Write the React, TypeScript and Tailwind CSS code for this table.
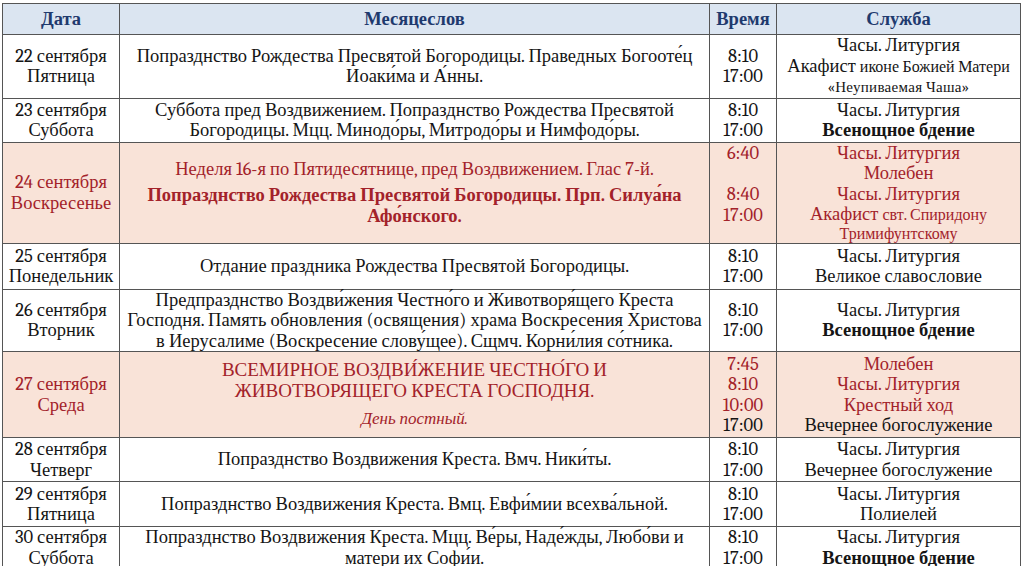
import React from "react";

const A = "\u0301";

type Line = { text: React.ReactNode; cls?: string };

type Row = {
  date: string;
  day: string;
  h: string;
  pink?: boolean;
  cal: React.ReactNode;
  times: Line[];
  service: Line[];
};

const red = "text-[#a3222a]";
const serif = "font-serif text-[18.5px] leading-[20.5px]";

const Akafist = ({ rest }: { rest: string }) => (
  <>
    Акафист <span className="font-serif text-[16px]">{rest}</span>
  </>
);

const rows: Row[] = [
  {
    date: "22 сентября",
    day: "Пятница",
    h: "h-[63px]",
    cal: (
      <>
        Попразднство Рождества Пресвятой Богородицы. Праведных Богооте{A}ц
        <br />
        Иоаки{A}ма и А{A}нны.
      </>
    ),
    times: [{ text: "8:10" }, { text: "17:00" }],
    service: [
      { text: "Часы. Литургия" },
      { text: <Akafist rest="иконе Божией Матери" /> },
      { text: "«Неупиваемая Чаша»", cls: "text-[15px] tracking-[0.3px]" },
    ],
  },
  {
    date: "23 сентября",
    day: "Суббота",
    h: "h-[44px]",
    cal: (
      <>
        Суббота пред Воздвижением. Попразднство Рождества Пресвятой
        <br />
        Богородицы. Мцц. Минодо{A}ры, Митродо{A}ры и Нимфодо{A}ры.
      </>
    ),
    times: [{ text: "8:10" }, { text: "17:00" }],
    service: [
      { text: "Часы. Литургия" },
      { text: "Всенощное бдение", cls: "font-bold" },
    ],
  },
  {
    date: "24 сентября",
    day: "Воскресенье",
    h: "h-[100px]",
    pink: true,
    cal: (
      <div className={red}>
        <p className="mb-[6px]">
          Неделя 16-я по Пятидесятнице, пред Воздвижением. Глас 7-й.
        </p>
        <p className="font-bold">
          Попразднство Рождества Пресвятой Богородицы. Прп. Силуа{A}на
          <br />
          Афо{A}нского.
        </p>
      </div>
    ),
    times: [
      { text: "6:40", cls: red },
      { text: "\u00a0" },
      { text: "8:40", cls: red },
      { text: "17:00", cls: red },
      { text: "\u00a0", cls: "leading-[17px]" },
    ],
    service: [
      { text: "Часы. Литургия", cls: red },
      { text: "Молебен", cls: red },
      { text: "Часы. Литургия", cls: red },
      { text: <Akafist rest="свт. Спиридону" />, cls: red },
      { text: "Тримифунтскому", cls: `${red} text-[16px] leading-[17px]` },
    ],
  },
  {
    date: "25 сентября",
    day: "Понедельник",
    h: "h-[46px]",
    cal: <>Отдание праздника Рождества Пресвятой Богородицы.</>,
    times: [{ text: "8:10" }, { text: "17:00" }],
    service: [{ text: "Часы. Литургия" }, { text: "Великое славословие" }],
  },
  {
    date: "26 сентября",
    day: "Вторник",
    h: "h-[62px]",
    cal: (
      <>
        Предпразднство Воздви{A}жения Честно{A}го и Животворя{A}щего Креста
        <br />
        Господня. Память обновления (освящения) храма Воскресения Христова
        <br />
        в Иерусалиме (Воскресение слову{A}щее). Сщмч. Корни{A}лия со{A}тника.
      </>
    ),
    times: [{ text: "8:10" }, { text: "17:00" }],
    service: [
      { text: "Часы. Литургия" },
      { text: "Всенощное бдение", cls: "font-bold" },
    ],
  },
  {
    date: "27 сентября",
    day: "Среда",
    h: "h-[86px]",
    pink: true,
    cal: (
      <div className={red}>
        <p className="text-[19px] leading-[21px] mb-[7px]">
          ВСЕМИРНОЕ ВОЗДВИ{A}ЖЕНИЕ ЧЕСТНО{A}ГО И
          <br />
          ЖИВОТВОРЯЩЕГО КРЕСТА ГОСПОДНЯ.
        </p>
        <p className="italic text-[17px]">День постный.</p>
      </div>
    ),
    times: [
      { text: "7:45", cls: red },
      { text: "8:10", cls: red },
      { text: "10:00", cls: red },
      { text: "17:00" },
    ],
    service: [
      { text: "Молебен", cls: red },
      { text: "Часы. Литургия", cls: red },
      { text: "Крестный ход", cls: red },
      { text: "Вечернее богослужение" },
    ],
  },
  {
    date: "28 сентября",
    day: "Четверг",
    h: "h-[44px]",
    cal: <>Попразднство Воздвижения Креста. Вмч. Ники{A}ты.</>,
    times: [{ text: "8:10" }, { text: "17:00" }],
    service: [{ text: "Часы. Литургия" }, { text: "Вечернее богослужение" }],
  },
  {
    date: "29 сентября",
    day: "Пятница",
    h: "h-[45px]",
    cal: (
      <>
        Попразднство Воздвижения Креста. Вмц. Евфи{A}мии всехва{A}льной.
      </>
    ),
    times: [{ text: "8:10" }, { text: "17:00" }],
    service: [{ text: "Часы. Литургия" }, { text: "Полиелей" }],
  },
  {
    date: "30 сентября",
    day: "Суббота",
    h: "h-[40px]",
    cal: (
      <>
        Попразднство Воздвижения Креста. Мцц. Ве{A}ры, Наде{A}жды, Любо{A}ви и
        <br />
        матери их Софи{A}и.
      </>
    ),
    times: [{ text: "8:10" }, { text: "17:00" }],
    service: [
      { text: "Часы. Литургия" },
      { text: "Всенощное бдение", cls: "font-bold" },
    ],
  },
];

const border = "border border-[#555555] text-center align-middle p-0 whitespace-nowrap";

function Cell({ children, cls = "" }: { children: React.ReactNode; cls?: string }) {
  return (
    <td className={border}>
      <div className={`${serif} ${cls}`}>{children}</div>
    </td>
  );
}

function Head({ children }: { children: React.ReactNode }) {
  return (
    <th className={border}>
      <div className={`${serif} font-bold text-[#1f3a6e]`}>{children}</div>
    </th>
  );
}

export default function App() {
  return (
    <div className="w-[1024px] h-[566px] overflow-hidden bg-white pt-[3px] pl-[2px] font-serif">
      <table className="table-fixed border-collapse w-[1018px] text-[#151515] font-serif">
        <colgroup>
          <col className="w-[117px]" />
          <col className="w-[590px]" />
          <col className="w-[67px]" />
          <col className="w-[244px]" />
        </colgroup>
        <thead>
          <tr className="h-[31px] bg-[#dbe5f1]">
            <Head>Дата</Head>
            <Head>Месяцеслов</Head>
            <Head>Время</Head>
            <Head>Служба</Head>
          </tr>
        </thead>
        <tbody>
          {rows.map((r) => (
            <tr key={r.date} className={`${r.h} ${r.pink ? "bg-[#f9e3d8]" : ""}`}>
              <Cell cls={r.pink ? red : ""}>
                {r.date}
                <br />
                {r.day}
              </Cell>
              <Cell>{r.cal}</Cell>
              <Cell>
                {r.times.map((t, i) => (
                  <div key={i} className={t.cls}>
                    {t.text}
                  </div>
                ))}
              </Cell>
              <Cell>
                {r.service.map((s, i) => (
                  <div key={i} className={s.cls}>
                    {s.text}
                  </div>
                ))}
              </Cell>
            </tr>
          ))}
        </tbody>
      </table>
    </div>
  );
}
